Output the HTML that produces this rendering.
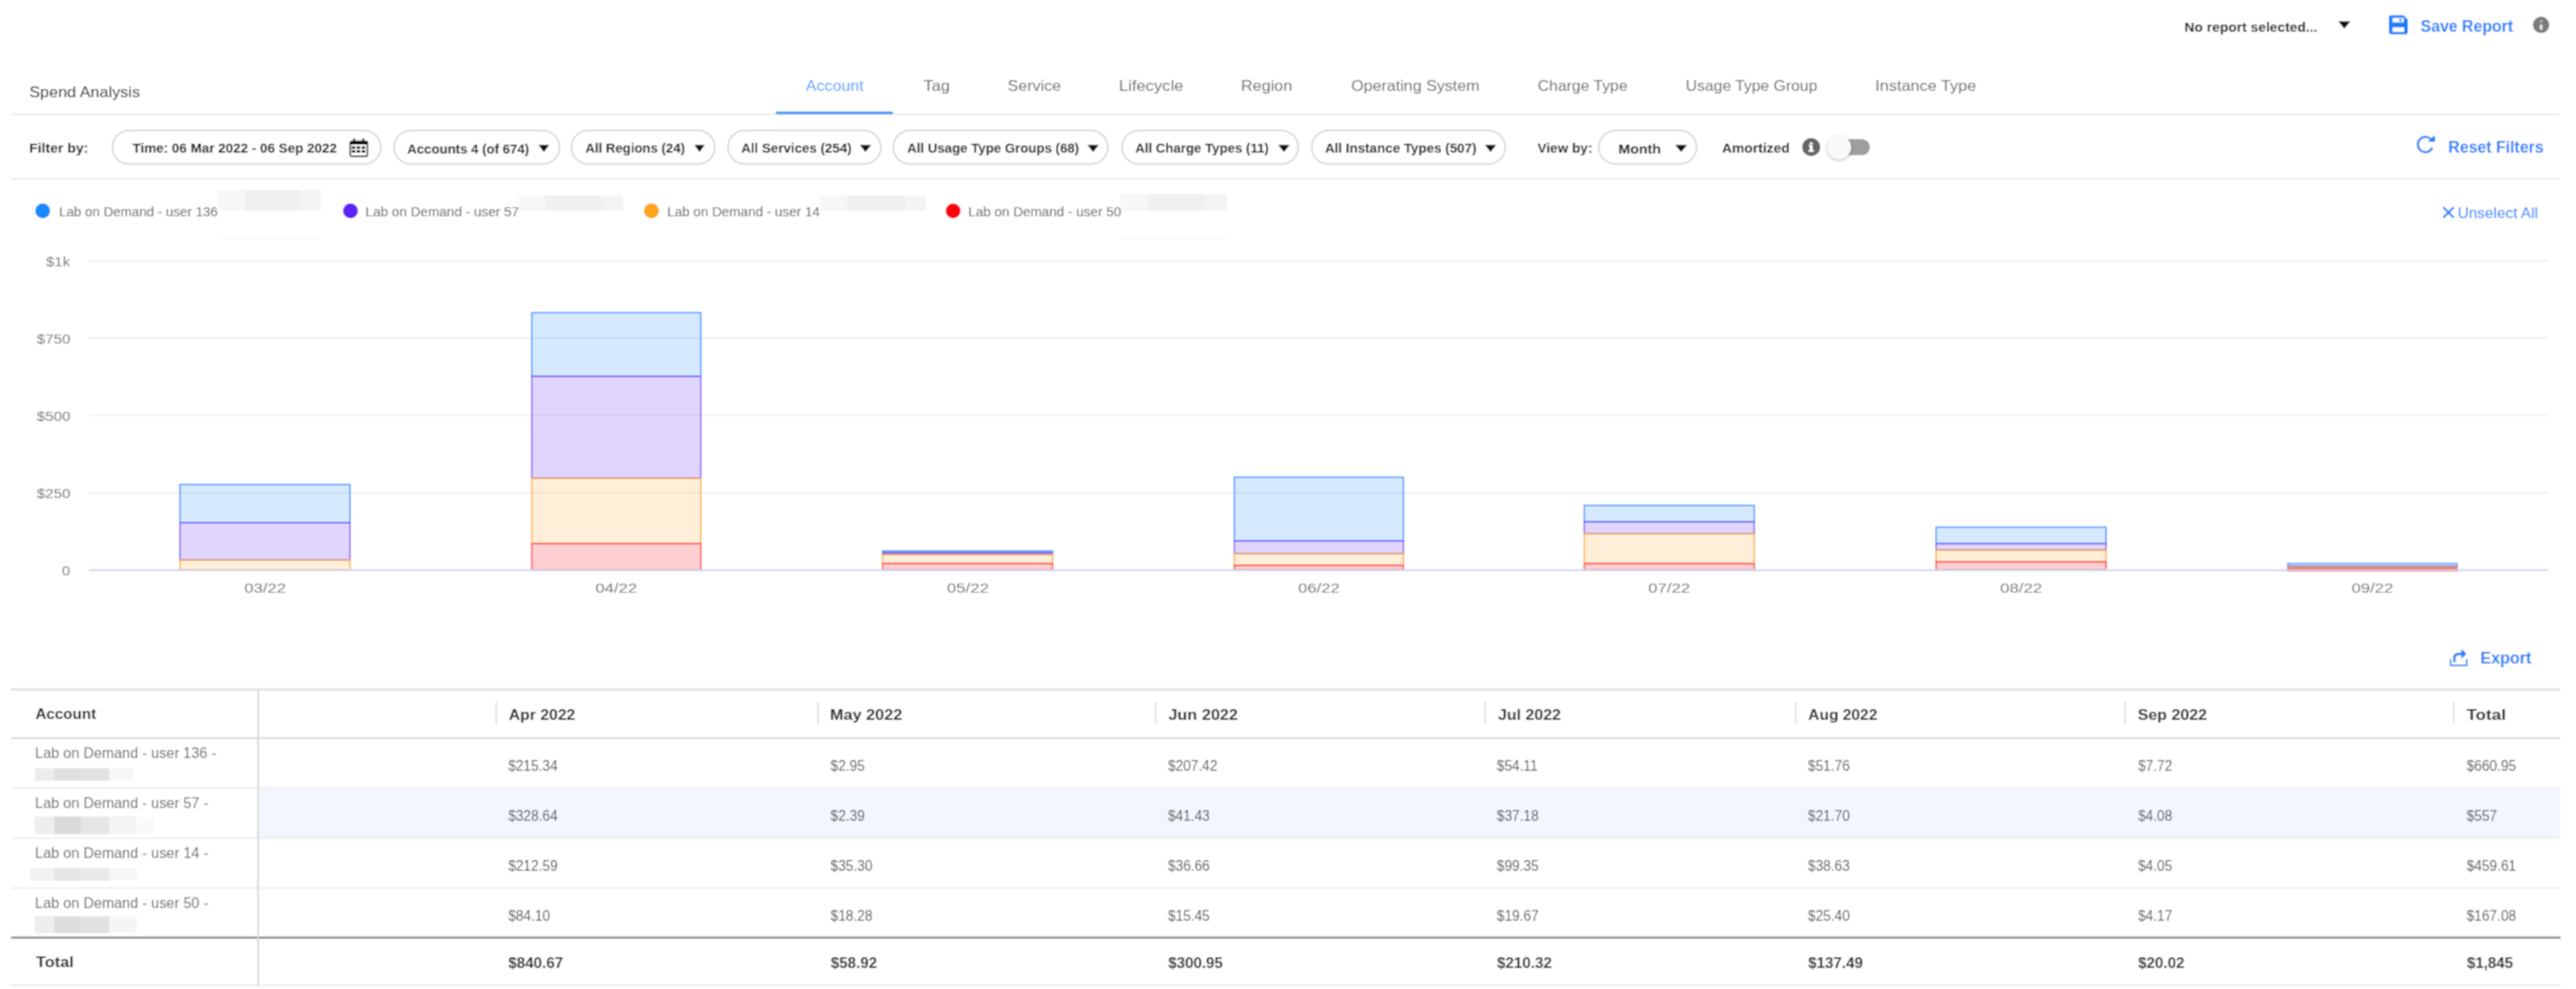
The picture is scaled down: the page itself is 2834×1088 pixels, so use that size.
<!DOCTYPE html>
<html><head><meta charset="utf-8"><title>Spend Analysis</title>
<style>
html,body{margin:0;padding:0;background:#fff;width:2834px;height:1088px;overflow:hidden}
svg{display:block;font-family:"Liberation Sans",sans-serif}
</style></head><body>
<svg width="2834" height="1088" viewBox="0 0 2834 1088">
<defs><filter id="bl" x="0" y="0" width="2834" height="1088" filterUnits="userSpaceOnUse"><feConvolveMatrix order="3" kernelMatrix="1 2 1 2 4 2 1 2 1" edgeMode="duplicate"/></filter></defs>
<g filter="url(#bl)">
<rect x="0" y="0" width="2834" height="1088" fill="#fff"/>
<text x="2403.31" y="34.50" font-size="15" fill="#161616" font-weight="bold" textLength="146.24" lengthAdjust="spacingAndGlyphs">No report selected...</text>
<path d="M2572.60 23.50 L2585.70 23.50 L2579.15 31.50 Z" fill="#111111"/>
<g transform="translate(2628.2,16.8)"><path d="M2.2 0 H16 L20.8 4.8 V18.7 Q20.8 20.9 18.6 20.9 H2.2 Q0 20.9 0 18.7 V2.2 Q0 0 2.2 0 Z" fill="#1f7ffc"/>
<rect x="4" y="2.8" width="12.3" height="5" fill="#fff"/><circle cx="12.7" cy="5.2" r="1.5" fill="#1f7ffc"/><rect x="4" y="13.3" width="12.8" height="5" fill="#fff"/></g>
<text x="2663.08" y="34.70" font-size="18.5" fill="#1f7ffc" font-weight="bold" textLength="101.71" lengthAdjust="spacingAndGlyphs">Save Report</text>
<circle cx="2795.6" cy="27.3" r="9" fill="#7c7c7c"/><rect x="2794.1" y="27" width="3" height="5.8" rx="1" fill="#e6e6e6"/><circle cx="2795.6" cy="23.3" r="1.5" fill="#b4b4b4"/>
<line x1="12.00" y1="125.80" x2="2816.00" y2="125.80" stroke="#e6e6e6" stroke-width="1.5"/>
<text x="32.20" y="106.70" font-size="16.5" fill="#222222" textLength="121.89" lengthAdjust="spacingAndGlyphs">Spend Analysis</text>
<text x="886.60" y="99.90" font-size="16.5" fill="#4f9bff" textLength="63.55" lengthAdjust="spacingAndGlyphs">Account</text>
<text x="1016.04" y="99.90" font-size="16.5" fill="#686868" textLength="28.86" lengthAdjust="spacingAndGlyphs">Tag</text>
<text x="1108.61" y="99.90" font-size="16.5" fill="#686868" textLength="58.68" lengthAdjust="spacingAndGlyphs">Service</text>
<text x="1231.04" y="99.90" font-size="16.5" fill="#686868" textLength="70.79" lengthAdjust="spacingAndGlyphs">Lifecycle</text>
<text x="1365.28" y="99.90" font-size="16.5" fill="#686868" textLength="56.36" lengthAdjust="spacingAndGlyphs">Region</text>
<text x="1486.51" y="99.90" font-size="16.5" fill="#686868" textLength="141.22" lengthAdjust="spacingAndGlyphs">Operating System</text>
<text x="1691.83" y="99.90" font-size="16.5" fill="#686868" textLength="98.79" lengthAdjust="spacingAndGlyphs">Charge Type</text>
<text x="1854.60" y="99.90" font-size="16.5" fill="#686868" textLength="144.70" lengthAdjust="spacingAndGlyphs">Usage Type Group</text>
<text x="2063.09" y="99.90" font-size="16.5" fill="#686868" textLength="111.07" lengthAdjust="spacingAndGlyphs">Instance Type</text>
<rect x="853.4" y="122.8" width="129.2" height="2.6" rx="1.3" fill="#338dfa"/>
<text x="32.00" y="167.70" font-size="14.8" fill="#111111" font-weight="bold" textLength="65.21" lengthAdjust="spacingAndGlyphs">Filter by:</text>
<rect x="123.50" y="143.5" width="295.50" height="37" rx="18.5" fill="#fff" stroke="#cfcfcf" stroke-width="1.5"/>
<rect x="433.50" y="143.5" width="182.10" height="37" rx="18.5" fill="#fff" stroke="#cfcfcf" stroke-width="1.5"/>
<rect x="628.70" y="143.5" width="157.80" height="37" rx="18.5" fill="#fff" stroke="#cfcfcf" stroke-width="1.5"/>
<rect x="800.90" y="143.5" width="168.10" height="37" rx="18.5" fill="#fff" stroke="#cfcfcf" stroke-width="1.5"/>
<rect x="982.70" y="143.5" width="236.10" height="37" rx="18.5" fill="#fff" stroke="#cfcfcf" stroke-width="1.5"/>
<rect x="1234.40" y="143.5" width="193.80" height="37" rx="18.5" fill="#fff" stroke="#cfcfcf" stroke-width="1.5"/>
<rect x="1443.10" y="143.5" width="212.90" height="37" rx="18.5" fill="#fff" stroke="#cfcfcf" stroke-width="1.5"/>
<rect x="1758.90" y="143.5" width="107.60" height="37" rx="18.5" fill="#fff" stroke="#cfcfcf" stroke-width="1.5"/>
<text x="145.85" y="167.80" font-size="14.8" fill="#111111" font-weight="bold" textLength="224.79" lengthAdjust="spacingAndGlyphs">Time: 06 Mar 2022 - 06 Sep 2022</text>
<text x="448.04" y="169.30" font-size="14.8" fill="#111111" font-weight="bold" textLength="134.08" lengthAdjust="spacingAndGlyphs">Accounts 4 (of 674)</text>
<text x="643.94" y="167.80" font-size="14.8" fill="#111111" font-weight="bold" textLength="109.64" lengthAdjust="spacingAndGlyphs">All Regions (24)</text>
<text x="815.43" y="167.80" font-size="14.8" fill="#111111" font-weight="bold" textLength="121.57" lengthAdjust="spacingAndGlyphs">All Services (254)</text>
<text x="998.04" y="167.80" font-size="14.8" fill="#111111" font-weight="bold" textLength="189.19" lengthAdjust="spacingAndGlyphs">All Usage Type Groups (68)</text>
<text x="1248.94" y="167.80" font-size="14.8" fill="#111111" font-weight="bold" textLength="146.93" lengthAdjust="spacingAndGlyphs">All Charge Types (11)</text>
<text x="1457.63" y="167.80" font-size="14.8" fill="#111111" font-weight="bold" textLength="166.79" lengthAdjust="spacingAndGlyphs">All Instance Types (507)</text>
<text x="1780.59" y="169.30" font-size="14.8" fill="#111111" font-weight="bold" textLength="46.73" lengthAdjust="spacingAndGlyphs">Month</text>
<path d="M592.50 159.50 L604.20 159.50 L598.35 167.30 Z" fill="#111111"/>
<path d="M764.00 159.50 L775.30 159.50 L769.65 167.30 Z" fill="#111111"/>
<path d="M946.00 159.50 L958.40 159.50 L952.20 167.30 Z" fill="#111111"/>
<path d="M1196.40 159.50 L1208.80 159.50 L1202.60 167.30 Z" fill="#111111"/>
<path d="M1406.30 159.50 L1418.80 159.50 L1412.55 167.30 Z" fill="#111111"/>
<path d="M1633.70 159.50 L1646.00 159.50 L1639.85 167.30 Z" fill="#111111"/>
<path d="M1843.00 159.50 L1856.00 159.50 L1849.50 167.30 Z" fill="#111111"/>
<g transform="translate(384.6,152.4)" fill="#111111"><rect x="0.75" y="3" width="19" height="16.5" rx="1.8" fill="none" stroke="#111111" stroke-width="1.5"/>
<rect x="0.75" y="3" width="19" height="3.6" /><rect x="4" y="0" width="2" height="4.5"/><rect x="14" y="0" width="2" height="4.5"/>
<rect x="2.3" y="8.5" width="3.8" height="2.8"/><rect x="7.8" y="8.5" width="3.8" height="2.8"/><rect x="13.3" y="8.5" width="3.8" height="2.8"/>
<rect x="2.3" y="12.8" width="3.8" height="2.8"/><rect x="7.8" y="12.8" width="3.8" height="2.8"/><rect x="13.3" y="12.8" width="3.8" height="2.8"/></g>
<text x="1691.53" y="167.70" font-size="14.8" fill="#111111" font-weight="bold" textLength="60.35" lengthAdjust="spacingAndGlyphs">View by:</text>
<text x="1894.62" y="167.70" font-size="14.8" fill="#111111" font-weight="bold" textLength="74.36" lengthAdjust="spacingAndGlyphs">Amortized</text>
<circle cx="1992.6" cy="161.8" r="10" fill="#666"/><rect x="1991" y="159.5" width="3.2" height="7" fill="#fff"/><rect x="1989.5" y="165.2" width="6.2" height="1.8" fill="#fff"/><rect x="1989.8" y="159.5" width="3" height="1.6" fill="#fff"/><rect x="1991" y="156.6" width="3.2" height="2.2" fill="#fff"/>
<rect x="2016" y="153" width="41.2" height="17.8" rx="8.9" fill="#9e9e9e"/>
<defs><filter id="sh" x="-50%" y="-50%" width="200%" height="200%"><feDropShadow dx="0" dy="1" stdDeviation="1.4" flood-color="#000" flood-opacity="0.35"/></filter></defs>
<circle cx="2023.2" cy="162" r="13.2" fill="#fafafa" filter="url(#sh)"/>
<g transform="translate(2658.4,148.4)"><path d="M15.94 4.66 A8.4 8.4 0 1 0 17.6 14.15" fill="none" stroke="#1f7ffc" stroke-width="2.3"/><path d="M12.6 7.7 L20.4 7.7 L20.4 0.2 Z" fill="#1f7ffc"/></g>
<text x="2693.57" y="168.40" font-size="17.8" fill="#1f7ffc" font-weight="bold" textLength="104.78" lengthAdjust="spacingAndGlyphs">Reset Filters</text>
<line x1="12.00" y1="196.80" x2="2816.00" y2="196.80" stroke="#e6e6e6" stroke-width="1.5"/>
<circle cx="47" cy="232" r="8.2" fill="#1e88ff"/>
<text x="65.03" y="238.40" font-size="15.5" fill="#606060" textLength="174.69" lengthAdjust="spacingAndGlyphs">Lab on Demand - user 136</text>
<circle cx="385.6" cy="232" r="8.2" fill="#5b22f5"/>
<text x="402.11" y="238.40" font-size="15.5" fill="#606060" textLength="169.05" lengthAdjust="spacingAndGlyphs">Lab on Demand - user 57</text>
<circle cx="716.7" cy="232" r="8.2" fill="#ffa31f"/>
<text x="734.02" y="238.40" font-size="15.5" fill="#606060" textLength="167.94" lengthAdjust="spacingAndGlyphs">Lab on Demand - user 14</text>
<circle cx="1048.6" cy="232" r="8.2" fill="#ff0010"/>
<text x="1065.21" y="238.40" font-size="15.5" fill="#606060" textLength="168.32" lengthAdjust="spacingAndGlyphs">Lab on Demand - user 50</text>
<rect x="240.40" y="209.20" width="112.80" height="22.50" fill="#f4f4f4"/>
<rect x="240.40" y="209.20" width="28.20" height="22.50" fill="#f7f7f7"/>
<rect x="269.73" y="209.20" width="60.91" height="22.50" fill="#f0f0f0"/>
<rect x="240.40" y="261.50" width="112.80" height="3.00" fill="#fbfbfb"/>
<rect x="570.40" y="215.00" width="114.90" height="16.70" fill="#f4f4f4"/>
<rect x="570.40" y="215.00" width="28.73" height="16.70" fill="#f7f7f7"/>
<rect x="600.27" y="215.00" width="62.05" height="16.70" fill="#f0f0f0"/>
<rect x="902.30" y="215.00" width="116.60" height="16.80" fill="#f4f4f4"/>
<rect x="902.30" y="215.00" width="29.15" height="16.80" fill="#f7f7f7"/>
<rect x="932.62" y="215.00" width="62.96" height="16.80" fill="#f0f0f0"/>
<rect x="1233.00" y="213.60" width="116.80" height="18.20" fill="#f4f4f4"/>
<rect x="1233.00" y="213.60" width="29.20" height="18.20" fill="#f7f7f7"/>
<rect x="1263.37" y="213.60" width="63.07" height="18.20" fill="#f0f0f0"/>
<rect x="1233.00" y="261.50" width="116.80" height="3.00" fill="#fbfbfb"/>
<path d="M2688 228 L2699.5 239.5 M2699.5 228 L2688 239.5" stroke="#1f7ffc" stroke-width="2.2"/>
<text x="2703.73" y="239.80" font-size="16.5" fill="#1f7ffc" textLength="88.47" lengthAdjust="spacingAndGlyphs">Unselect All</text>
<line x1="97.70" y1="286.90" x2="2803.40" y2="286.90" stroke="#e8e8e8" stroke-width="1.2"/>
<line x1="97.70" y1="371.95" x2="2803.40" y2="371.95" stroke="#e8e8e8" stroke-width="1.2"/>
<line x1="97.70" y1="457.00" x2="2803.40" y2="457.00" stroke="#e8e8e8" stroke-width="1.2"/>
<line x1="97.70" y1="542.05" x2="2803.40" y2="542.05" stroke="#e8e8e8" stroke-width="1.2"/>
<text x="50.84" y="292.50" font-size="15" fill="#6f6f6f" textLength="26.20" lengthAdjust="spacingAndGlyphs">$1k</text>
<text x="40.53" y="377.55" font-size="15" fill="#6f6f6f" textLength="37.04" lengthAdjust="spacingAndGlyphs">$750</text>
<text x="40.53" y="462.60" font-size="15" fill="#6f6f6f" textLength="37.04" lengthAdjust="spacingAndGlyphs">$500</text>
<text x="40.53" y="547.65" font-size="15" fill="#6f6f6f" textLength="37.04" lengthAdjust="spacingAndGlyphs">$250</text>
<text x="68.14" y="632.70" font-size="15" fill="#6f6f6f" textLength="9.15" lengthAdjust="spacingAndGlyphs">0</text>
<rect x="198.00" y="533.00" width="187.00" height="42.00" fill="rgba(30,136,255,0.19)" stroke="#3d90ff" stroke-width="1.4"/>
<rect x="198.00" y="575.00" width="187.00" height="41.00" fill="rgba(91,34,245,0.19)" stroke="#7c58f6" stroke-width="1.4"/>
<rect x="198.00" y="616.00" width="187.00" height="11.00" fill="rgba(255,163,31,0.17)" stroke="#ffa936" stroke-width="1.4"/>
<text x="268.66" y="652.20" font-size="15" fill="#6f6f6f" textLength="46.10" lengthAdjust="spacingAndGlyphs">03/22</text>
<rect x="585.00" y="344.00" width="186.00" height="70.00" fill="rgba(30,136,255,0.19)" stroke="#3d90ff" stroke-width="1.4"/>
<rect x="585.00" y="414.00" width="186.00" height="112.00" fill="rgba(91,34,245,0.19)" stroke="#7c58f6" stroke-width="1.4"/>
<rect x="585.00" y="526.00" width="186.00" height="72.00" fill="rgba(255,163,31,0.17)" stroke="#ffa936" stroke-width="1.4"/>
<rect x="585.00" y="598.00" width="186.00" height="29.00" fill="rgba(255,0,16,0.19)" stroke="#ff3d47" stroke-width="1.4"/>
<text x="654.91" y="652.20" font-size="15" fill="#6f6f6f" textLength="46.10" lengthAdjust="spacingAndGlyphs">04/22</text>
<rect x="971.00" y="606.00" width="187.00" height="2.00" fill="rgba(30,136,255,0.19)" stroke="#3d90ff" stroke-width="1.4"/>
<rect x="971.00" y="608.00" width="187.00" height="2.00" fill="rgba(91,34,245,0.19)" stroke="#7c58f6" stroke-width="1.4"/>
<rect x="971.00" y="610.00" width="187.00" height="10.00" fill="rgba(255,163,31,0.17)" stroke="#ffa936" stroke-width="1.4"/>
<rect x="971.00" y="620.00" width="187.00" height="7.00" fill="rgba(255,0,16,0.19)" stroke="#ff3d47" stroke-width="1.4"/>
<text x="1041.86" y="652.20" font-size="15" fill="#6f6f6f" textLength="46.10" lengthAdjust="spacingAndGlyphs">05/22</text>
<rect x="1358.00" y="525.00" width="186.00" height="70.00" fill="rgba(30,136,255,0.19)" stroke="#3d90ff" stroke-width="1.4"/>
<rect x="1358.00" y="595.00" width="186.00" height="14.00" fill="rgba(91,34,245,0.19)" stroke="#7c58f6" stroke-width="1.4"/>
<rect x="1358.00" y="609.00" width="186.00" height="13.00" fill="rgba(255,163,31,0.17)" stroke="#ffa936" stroke-width="1.4"/>
<rect x="1358.00" y="622.00" width="186.00" height="5.00" fill="rgba(255,0,16,0.19)" stroke="#ff3d47" stroke-width="1.4"/>
<text x="1427.96" y="652.20" font-size="15" fill="#6f6f6f" textLength="46.10" lengthAdjust="spacingAndGlyphs">06/22</text>
<rect x="1743.00" y="556.00" width="187.00" height="18.00" fill="rgba(30,136,255,0.19)" stroke="#3d90ff" stroke-width="1.4"/>
<rect x="1743.00" y="574.00" width="187.00" height="13.00" fill="rgba(91,34,245,0.19)" stroke="#7c58f6" stroke-width="1.4"/>
<rect x="1743.00" y="587.00" width="187.00" height="33.00" fill="rgba(255,163,31,0.17)" stroke="#ffa936" stroke-width="1.4"/>
<rect x="1743.00" y="620.00" width="187.00" height="7.00" fill="rgba(255,0,16,0.19)" stroke="#ff3d47" stroke-width="1.4"/>
<text x="1813.36" y="652.20" font-size="15" fill="#6f6f6f" textLength="46.10" lengthAdjust="spacingAndGlyphs">07/22</text>
<rect x="2130.00" y="580.00" width="187.00" height="18.00" fill="rgba(30,136,255,0.19)" stroke="#3d90ff" stroke-width="1.4"/>
<rect x="2130.00" y="598.00" width="187.00" height="7.00" fill="rgba(91,34,245,0.19)" stroke="#7c58f6" stroke-width="1.4"/>
<rect x="2130.00" y="605.00" width="187.00" height="13.00" fill="rgba(255,163,31,0.17)" stroke="#ffa936" stroke-width="1.4"/>
<rect x="2130.00" y="618.00" width="187.00" height="9.00" fill="rgba(255,0,16,0.19)" stroke="#ff3d47" stroke-width="1.4"/>
<text x="2200.61" y="652.20" font-size="15" fill="#6f6f6f" textLength="46.10" lengthAdjust="spacingAndGlyphs">08/22</text>
<rect x="2517.00" y="620.00" width="186.00" height="3.00" fill="rgba(30,136,255,0.19)" stroke="#3d90ff" stroke-width="1.4"/>
<rect x="2517.00" y="623.00" width="186.00" height="2.00" fill="rgba(91,34,245,0.19)" stroke="#7c58f6" stroke-width="1.4"/>
<rect x="2517.00" y="624.00" width="186.00" height="2.00" fill="rgba(255,163,31,0.17)" stroke="#ffa936" stroke-width="1.4"/>
<rect x="2517.00" y="626.00" width="186.00" height="2.00" fill="rgba(255,0,16,0.19)" stroke="#ff3d47" stroke-width="1.4"/>
<text x="2587.01" y="652.20" font-size="15" fill="#6f6f6f" textLength="46.10" lengthAdjust="spacingAndGlyphs">09/22</text>
<line x1="97.70" y1="627.30" x2="2803.40" y2="627.30" stroke="#ccd6eb" stroke-width="2"/>
<path d="M2696 726 V731.9 H2713.8 V726" fill="none" stroke="#1f7ffc" stroke-width="2" stroke-linecap="round" stroke-linejoin="round" opacity="0.85"/>
<path d="M2700.2 727.4 V724.4 Q2700.2 719.4 2705.2 719.4 H2709" fill="none" stroke="#1f7ffc" stroke-width="2.6" stroke-linecap="round"/>
<path d="M2708.2 714.2 L2713.2 719.2 L2708.2 724.2 Z" fill="#1f7ffc" stroke="#1f7ffc" stroke-width="0.6" stroke-linejoin="round"/>
<text x="2728.85" y="729.70" font-size="18" fill="#1f7ffc" font-weight="bold" textLength="56.07" lengthAdjust="spacingAndGlyphs">Export</text>
<rect x="284.00" y="867.00" width="2533.00" height="55.00" fill="#f3f7fd"/>
<line x1="12.00" y1="758.50" x2="2817.00" y2="758.50" stroke="#dedede" stroke-width="2.2"/>
<line x1="12.00" y1="812.00" x2="2817.00" y2="812.00" stroke="#dcdcdc" stroke-width="1.8"/>
<line x1="12.00" y1="867.00" x2="2817.00" y2="867.00" stroke="#ececec" stroke-width="1.5"/>
<line x1="12.00" y1="922.00" x2="2817.00" y2="922.00" stroke="#ececec" stroke-width="1.5"/>
<line x1="12.00" y1="977.00" x2="2817.00" y2="977.00" stroke="#ececec" stroke-width="1.5"/>
<line x1="12.00" y1="1031.50" x2="2817.00" y2="1031.50" stroke="#777777" stroke-width="2.2"/>
<line x1="12.00" y1="1084.00" x2="2817.00" y2="1084.00" stroke="#ececec" stroke-width="1.8"/>
<line x1="284.00" y1="758.00" x2="284.00" y2="1084.00" stroke="#d6d6d6" stroke-width="1.8"/>
<line x1="546.00" y1="772.00" x2="546.00" y2="797.00" stroke="#d9d9d9" stroke-width="1.5"/>
<line x1="900.00" y1="772.00" x2="900.00" y2="797.00" stroke="#d9d9d9" stroke-width="1.5"/>
<line x1="1271.50" y1="772.00" x2="1271.50" y2="797.00" stroke="#d9d9d9" stroke-width="1.5"/>
<line x1="1634.00" y1="772.00" x2="1634.00" y2="797.00" stroke="#d9d9d9" stroke-width="1.5"/>
<line x1="1975.60" y1="772.00" x2="1975.60" y2="797.00" stroke="#d9d9d9" stroke-width="1.5"/>
<line x1="2338.00" y1="772.00" x2="2338.00" y2="797.00" stroke="#d9d9d9" stroke-width="1.5"/>
<line x1="2699.50" y1="772.00" x2="2699.50" y2="797.00" stroke="#d9d9d9" stroke-width="1.5"/>
<text x="38.88" y="791.00" font-size="17" fill="#262626" font-weight="bold" textLength="66.97" lengthAdjust="spacingAndGlyphs">Account</text>
<text x="559.77" y="791.60" font-size="17" fill="#262626" font-weight="bold" textLength="73.22" lengthAdjust="spacingAndGlyphs">Apr 2022</text>
<text x="913.03" y="791.60" font-size="17" fill="#262626" font-weight="bold" textLength="79.73" lengthAdjust="spacingAndGlyphs">May 2022</text>
<text x="1285.43" y="791.60" font-size="17" fill="#262626" font-weight="bold" textLength="76.59" lengthAdjust="spacingAndGlyphs">Jun 2022</text>
<text x="1647.94" y="791.60" font-size="17" fill="#262626" font-weight="bold" textLength="69.21" lengthAdjust="spacingAndGlyphs">Jul 2022</text>
<text x="1989.37" y="791.60" font-size="17" fill="#262626" font-weight="bold" textLength="76.04" lengthAdjust="spacingAndGlyphs">Aug 2022</text>
<text x="2351.67" y="791.60" font-size="17" fill="#262626" font-weight="bold" textLength="76.46" lengthAdjust="spacingAndGlyphs">Sep 2022</text>
<text x="2713.51" y="791.60" font-size="17" fill="#262626" font-weight="bold" textLength="43.39" lengthAdjust="spacingAndGlyphs">Total</text>
<text x="38.52" y="834.40" font-size="16.5" fill="#686868" textLength="199.46" lengthAdjust="spacingAndGlyphs">Lab on Demand - user 136 -</text>
<text x="559.15" y="847.70" font-size="16" fill="#555555" textLength="54.37" lengthAdjust="spacingAndGlyphs">$215.34</text>
<text x="913.85" y="847.70" font-size="16" fill="#555555" textLength="37.64" lengthAdjust="spacingAndGlyphs">$2.95</text>
<text x="1284.95" y="847.70" font-size="16" fill="#555555" textLength="54.37" lengthAdjust="spacingAndGlyphs">$207.42</text>
<text x="1646.85" y="847.70" font-size="16" fill="#555555" textLength="44.89" lengthAdjust="spacingAndGlyphs">$54.11</text>
<text x="1989.05" y="847.70" font-size="16" fill="#555555" textLength="46.00" lengthAdjust="spacingAndGlyphs">$51.76</text>
<text x="2352.15" y="847.70" font-size="16" fill="#555555" textLength="37.64" lengthAdjust="spacingAndGlyphs">$7.72</text>
<text x="2713.75" y="847.70" font-size="16" fill="#555555" textLength="54.37" lengthAdjust="spacingAndGlyphs">$660.95</text>
<text x="38.52" y="889.40" font-size="16.5" fill="#686868" textLength="190.74" lengthAdjust="spacingAndGlyphs">Lab on Demand - user 57 -</text>
<text x="559.15" y="902.70" font-size="16" fill="#555555" textLength="54.37" lengthAdjust="spacingAndGlyphs">$328.64</text>
<text x="913.85" y="902.70" font-size="16" fill="#555555" textLength="37.64" lengthAdjust="spacingAndGlyphs">$2.39</text>
<text x="1284.95" y="902.70" font-size="16" fill="#555555" textLength="46.00" lengthAdjust="spacingAndGlyphs">$41.43</text>
<text x="1646.85" y="902.70" font-size="16" fill="#555555" textLength="46.00" lengthAdjust="spacingAndGlyphs">$37.18</text>
<text x="1989.05" y="902.70" font-size="16" fill="#555555" textLength="46.00" lengthAdjust="spacingAndGlyphs">$21.70</text>
<text x="2352.15" y="902.70" font-size="16" fill="#555555" textLength="37.64" lengthAdjust="spacingAndGlyphs">$4.08</text>
<text x="2713.75" y="902.70" font-size="16" fill="#555555" textLength="33.46" lengthAdjust="spacingAndGlyphs">$557</text>
<text x="38.52" y="944.40" font-size="16.5" fill="#686868" textLength="190.74" lengthAdjust="spacingAndGlyphs">Lab on Demand - user 14 -</text>
<text x="559.15" y="957.70" font-size="16" fill="#555555" textLength="54.37" lengthAdjust="spacingAndGlyphs">$212.59</text>
<text x="913.85" y="957.70" font-size="16" fill="#555555" textLength="46.00" lengthAdjust="spacingAndGlyphs">$35.30</text>
<text x="1284.95" y="957.70" font-size="16" fill="#555555" textLength="46.00" lengthAdjust="spacingAndGlyphs">$36.66</text>
<text x="1646.85" y="957.70" font-size="16" fill="#555555" textLength="46.00" lengthAdjust="spacingAndGlyphs">$99.35</text>
<text x="1989.05" y="957.70" font-size="16" fill="#555555" textLength="46.00" lengthAdjust="spacingAndGlyphs">$38.63</text>
<text x="2352.15" y="957.70" font-size="16" fill="#555555" textLength="37.64" lengthAdjust="spacingAndGlyphs">$4.05</text>
<text x="2713.75" y="957.70" font-size="16" fill="#555555" textLength="54.37" lengthAdjust="spacingAndGlyphs">$459.61</text>
<text x="38.52" y="999.40" font-size="16.5" fill="#686868" textLength="190.74" lengthAdjust="spacingAndGlyphs">Lab on Demand - user 50 -</text>
<text x="559.15" y="1012.70" font-size="16" fill="#555555" textLength="46.00" lengthAdjust="spacingAndGlyphs">$84.10</text>
<text x="913.85" y="1012.70" font-size="16" fill="#555555" textLength="46.00" lengthAdjust="spacingAndGlyphs">$18.28</text>
<text x="1284.95" y="1012.70" font-size="16" fill="#555555" textLength="46.00" lengthAdjust="spacingAndGlyphs">$15.45</text>
<text x="1646.85" y="1012.70" font-size="16" fill="#555555" textLength="46.00" lengthAdjust="spacingAndGlyphs">$19.67</text>
<text x="1989.05" y="1012.70" font-size="16" fill="#555555" textLength="46.00" lengthAdjust="spacingAndGlyphs">$25.40</text>
<text x="2352.15" y="1012.70" font-size="16" fill="#555555" textLength="37.64" lengthAdjust="spacingAndGlyphs">$4.17</text>
<text x="2713.75" y="1012.70" font-size="16" fill="#555555" textLength="54.37" lengthAdjust="spacingAndGlyphs">$167.08</text>
<rect x="38.50" y="845.10" width="21.10" height="13.70" fill="#ececec"/>
<rect x="59.60" y="845.10" width="29.80" height="13.70" fill="#dfdfdf"/>
<rect x="89.40" y="845.10" width="30.60" height="13.70" fill="#e2e2e2"/>
<rect x="120.00" y="845.10" width="26.60" height="13.70" fill="#f7f7f7"/>
<rect x="38.00" y="898.30" width="21.60" height="19.30" fill="#eeeeee"/>
<rect x="59.60" y="898.30" width="29.80" height="19.30" fill="#dadada"/>
<rect x="89.40" y="898.30" width="30.60" height="19.30" fill="#e5e5e5"/>
<rect x="120.00" y="898.30" width="30.30" height="19.30" fill="#f4f4f4"/>
<rect x="150.30" y="898.30" width="18.70" height="19.30" fill="#fafafa"/>
<rect x="33.00" y="955.00" width="26.60" height="13.80" fill="#f2f2f2"/>
<rect x="59.60" y="955.00" width="29.80" height="13.80" fill="#e5e5e5"/>
<rect x="89.40" y="955.00" width="30.60" height="13.80" fill="#e8e8e8"/>
<rect x="120.00" y="955.00" width="30.30" height="13.80" fill="#f6f6f6"/>
<rect x="38.00" y="1008.00" width="21.60" height="18.70" fill="#eeeeee"/>
<rect x="59.60" y="1008.00" width="29.80" height="18.70" fill="#dcdcdc"/>
<rect x="89.40" y="1008.00" width="30.60" height="18.70" fill="#e1e1e1"/>
<rect x="120.00" y="1008.00" width="30.30" height="18.70" fill="#f5f5f5"/>
<text x="39.62" y="1064.00" font-size="17" fill="#222" font-weight="bold" textLength="41.63" lengthAdjust="spacingAndGlyphs">Total</text>
<text x="559.35" y="1065.00" font-size="16" fill="#2a2a2a" font-weight="bold" textLength="60.15" lengthAdjust="spacingAndGlyphs">$840.67</text>
<text x="914.05" y="1065.00" font-size="16" fill="#2a2a2a" font-weight="bold" textLength="50.90" lengthAdjust="spacingAndGlyphs">$58.92</text>
<text x="1285.15" y="1065.00" font-size="16" fill="#2a2a2a" font-weight="bold" textLength="60.15" lengthAdjust="spacingAndGlyphs">$300.95</text>
<text x="1647.05" y="1065.00" font-size="16" fill="#2a2a2a" font-weight="bold" textLength="60.15" lengthAdjust="spacingAndGlyphs">$210.32</text>
<text x="1989.25" y="1065.00" font-size="16" fill="#2a2a2a" font-weight="bold" textLength="60.15" lengthAdjust="spacingAndGlyphs">$137.49</text>
<text x="2352.35" y="1065.00" font-size="16" fill="#2a2a2a" font-weight="bold" textLength="50.90" lengthAdjust="spacingAndGlyphs">$20.02</text>
<text x="2713.95" y="1065.00" font-size="16" fill="#2a2a2a" font-weight="bold" textLength="50.90" lengthAdjust="spacingAndGlyphs">$1,845</text>
</g>
</svg>
</body></html>
